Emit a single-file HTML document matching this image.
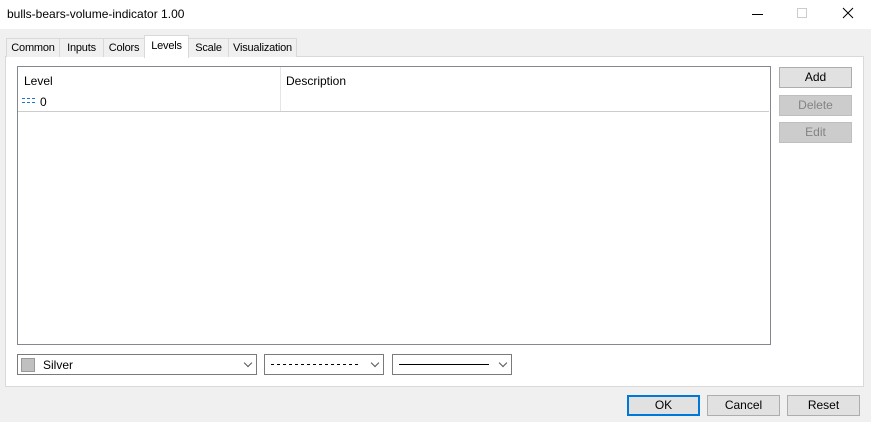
<!DOCTYPE html><html><head><style>
*{box-sizing:border-box}body{margin:0;width:871px;height:422px;background:#f0f0f0;font-family:"Liberation Sans",sans-serif;font-size:12px;color:#000;position:relative;overflow:hidden}
.a{position:absolute}
.title{left:0;top:0;width:871px;height:29px;background:#fff}
.tab{position:absolute;top:38px;height:19px;border:1px solid #d9d9d9;border-bottom:none;background:#f0f0f0;text-align:center;line-height:18px;font-size:11px;letter-spacing:-0.2px}
.btn{position:absolute;width:73px;height:21px;border:1px solid #adadad;background:#e1e1e1;text-align:center;line-height:19px}
.dis{background:#cccccc;border-color:#bfbfbf;color:#838383}
.cb{position:absolute;top:354px;height:21px;border:1px solid #7a7a7a;background:#fff}
.arr{position:absolute;right:5px;top:5px;width:6px;height:6px;border-right:1px solid #555;border-bottom:1px solid #555;transform:rotate(45deg)}
</style></head><body>
<div class="a title"><span class="a" style="left:7px;top:7px;font-size:12px">bulls-bears-volume-indicator 1.00</span>
<div class="a" style="left:752px;top:14px;width:11px;height:1px;background:#000"></div>
<div class="a" style="left:797px;top:8px;width:10px;height:10px;border:1px solid #ccc"></div>
<svg class="a" style="left:842px;top:7px" width="12" height="12"><path d="M1 1L11 11M11 1L1 11" stroke="#000" stroke-width="1"/></svg></div>
<div class="a" style="left:5px;top:56px;width:859px;height:331px;background:#fff;border:1px solid #d9d9d9"></div>
<div class="tab" style="left:6px;width:54px">Common</div>
<div class="tab" style="left:59px;width:45px">Inputs</div>
<div class="tab" style="left:103px;width:42px">Colors</div>
<div class="tab" style="left:188px;width:41px">Scale</div>
<div class="tab" style="left:228px;width:69px">Visualization</div>
<div class="tab" style="left:144px;top:35px;height:23px;width:45px;background:#fff;line-height:20px">Levels</div>
<div class="a" style="left:17px;top:66px;width:754px;height:279px;border:1px solid #828790;background:#fff">
<div class="a" style="left:0;top:44px;width:751px;height:1px;background:#ccc"></div>
<div class="a" style="left:262px;top:0;width:1px;height:44px;background:#e5e5e5"></div>
<span class="a" style="left:6px;top:7px">Level</span>
<span class="a" style="left:268px;top:7px">Description</span>
<div class="a" style="left:4px;top:31px;width:13px;border-top:1px dashed #1e74c8"></div>
<div class="a" style="left:4px;top:35px;width:13px;border-top:1px dashed #1e74c8"></div>
<span class="a" style="left:22px;top:28px">0</span></div>
<div class="btn" style="left:779px;top:67px">Add</div>
<div class="btn dis" style="left:779px;top:95px">Delete</div>
<div class="btn dis" style="left:779px;top:122px">Edit</div>
<div class="cb" style="left:17px;width:240px"><div class="a" style="left:3px;top:3px;width:14px;height:14px;background:#c0c0c0;border:1px solid #999"></div><span class="a" style="left:25px;top:3px">Silver</span><div class="arr"></div></div>
<div class="cb" style="left:264px;width:120px"><svg class="a" style="left:6px;top:9px" width="90" height="2"><line x1="0" y1="0.5" x2="90" y2="0.5" stroke="#000" stroke-dasharray="3,3"/></svg><div class="arr"></div></div>
<div class="cb" style="left:392px;width:120px"><div class="a" style="left:6px;top:9px;width:90px;border-top:1px solid #000"></div><div class="arr"></div></div>
<div class="btn" style="left:627px;top:395px;border:2px solid #0078d7;line-height:17px">OK</div>
<div class="btn" style="left:707px;top:395px">Cancel</div>
<div class="btn" style="left:787px;top:395px">Reset</div>
</body></html>
